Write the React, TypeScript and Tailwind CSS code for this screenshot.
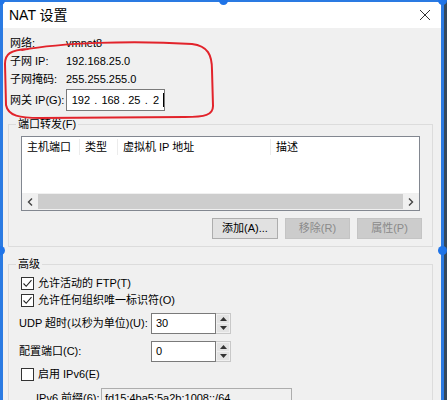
import React from "react";

const FONT = "font-[Liberation_Sans,Noto_Sans_CJK_SC,sans-serif]";

function CheckBox({ checked }: { checked?: boolean }) {
  return (
    <span className="flex h-[13px] w-[13px] shrink-0 items-center justify-center border border-[#333] bg-white">
      {checked && (
        <svg width="11" height="11" viewBox="0 0 11 11">
          <polyline points="1.5,5.5 4.2,8.3 9.5,2.2" fill="none" stroke="#222" strokeWidth="1.1" />
        </svg>
      )}
    </span>
  );
}

function Spin({ value }: { value: string }) {
  return (
    <div className="flex h-[21px]">
      <div className="flex w-[65px] items-center border border-[#7a7a7a] bg-white pl-[4px]">{value}</div>
      <div className="flex w-[15px] flex-col gap-px border-y border-r border-[#c8c8c8] bg-[#f0f0f0] p-px">
        <div className="flex flex-1 items-center justify-center bg-[#e3e3e3]">
          <svg width="7" height="4" viewBox="0 0 7 4"><polygon points="0,4 3.5,0 7,4" fill="#333" /></svg>
        </div>
        <div className="flex flex-1 items-center justify-center bg-[#e3e3e3]">
          <svg width="7" height="4" viewBox="0 0 7 4"><polygon points="0,0 3.5,4 7,0" fill="#333" /></svg>
        </div>
      </div>
    </div>
  );
}

function Group({ title, className, children }: { title: string; className?: string; children: React.ReactNode }) {
  return (
    <div className={`relative border border-[#dcdcdc] ${className ?? ""}`}>
      <span className="absolute -top-[9px] left-[7px] whitespace-nowrap bg-[#f0f0f0] px-[2px] leading-[16px]">{title}</span>
      {children}
    </div>
  );
}

export default function App() {
  return (
    <div className={`relative flex h-[400px] w-[447px] overflow-hidden bg-[#34485c] text-black ${FONT}`}>
      <div className="flex w-[444px] flex-col border-x-[3px] border-t-2 border-[#2a7ae2] bg-[#f0f0f0]">
        {/* title bar */}
        <div className="flex h-[26px] shrink-0 items-center justify-between bg-white pl-[6px] pr-[10px]">
          <span className="text-[14px]">NAT 设置</span>
          <svg width="12" height="12" viewBox="0 0 12 12">
            <path d="M1 1 L11 11 M11 1 L1 11" stroke="#333" strokeWidth="1" />
          </svg>
        </div>

        {/* body */}
        <div className="flex flex-col whitespace-nowrap pl-[5px] pr-[8px] pt-[6px] text-[11px]">
          <div className="flex h-[18px] items-center pl-[2px]">
            <span className="w-[56px]">网络:</span>
            <span>vmnet8</span>
          </div>
          <div className="flex h-[18px] items-center pl-[2px]">
            <span className="w-[56px]">子网 IP:</span>
            <span>192.168.25.0</span>
          </div>
          <div className="flex h-[19px] items-center pl-[2px]">
            <span className="w-[56px]">子网掩码:</span>
            <span>255.255.255.0</span>
          </div>
          <div className="flex h-[22px] items-center pl-[2px]">
            <span className="w-[56px]">网关 IP(G):</span>
            <div className="flex h-[22px] w-[99px] items-center border border-[#7a7a7a] bg-white pl-[4px]">
              <span className="w-[20px] text-center">192</span>
              <span className="w-[10px] text-center">.</span>
              <span className="w-[20px] text-center">168</span>
              <span className="w-[6px] text-center">.</span>
              <span className="w-[16px] text-center">25</span>
              <span className="w-[8px] text-center">.</span>
              <span className="w-[12px] text-center">2</span>
              <span className="ml-[1px] h-[14px] w-px bg-black" />
            </div>
          </div>

          {/* port forwarding */}
          <Group title="端口转发(F)" className="mt-[13px] h-[123px] pl-[12px] pr-[12px] pt-[11px]">
            <div className="flex h-[75px] flex-col border border-[#828790] bg-white">
              <div className="flex h-[20px] items-center">
                <span className="w-[58px] border-r border-[#ececec] pl-[5px]">主机端口</span>
                <span className="w-[38px] border-r border-[#ececec] pl-[5px]">类型</span>
                <span className="w-[153px] border-r border-[#ececec] pl-[5px]">虚拟机 IP 地址</span>
                <span className="pl-[5px]">描述</span>
              </div>
              <div className="flex-1" />
              <div className="flex h-[17px] items-center bg-[#f0f0f0]">
                <span className="flex w-[16px] justify-center">
                  <svg width="6" height="8" viewBox="0 0 6 8"><polyline points="5,0.5 1.5,4 5,7.5" fill="none" stroke="#444" strokeWidth="1.4" /></svg>
                </span>
                <div className="h-[15px] flex-1 bg-[#cdcdcd]" />
                <span className="flex w-[16px] justify-center">
                  <svg width="6" height="8" viewBox="0 0 6 8"><polyline points="1,0.5 4.5,4 1,7.5" fill="none" stroke="#444" strokeWidth="1.4" /></svg>
                </span>
              </div>
            </div>
            <div className="-mr-[2px] mt-[7px] flex justify-end gap-[7px]">
              <button className="h-[21px] w-[66px] border border-[#adadad] bg-[#e1e1e1]">添加(A)...</button>
              <button className="h-[21px] w-[65px] border border-[#c4c4c4] bg-[#cccccc] text-[#8a8a8a]">移除(R)</button>
              <button className="h-[21px] w-[65px] border border-[#c4c4c4] bg-[#cccccc] text-[#8a8a8a]">属性(P)</button>
            </div>
          </Group>

          {/* advanced */}
          <Group title="高级" className="mt-[17px] h-[160px] pl-[12px] pt-[10px]">
            <div className="flex h-[17px] items-center gap-[4px]">
              <CheckBox checked />
              <span>允许活动的 FTP(T)</span>
            </div>
            <div className="flex h-[17px] items-center gap-[4px]">
              <CheckBox checked />
              <span>允许任何组织唯一标识符(O)</span>
            </div>
            <div className="-ml-[2px] mt-[4px] flex items-center">
              <span className="w-[132px]">UDP 超时(以秒为单位)(U):</span>
              <Spin value="30" />
            </div>
            <div className="-ml-[2px] mt-[7px] flex items-center">
              <span className="w-[132px]">配置端口(C):</span>
              <Spin value="0" />
            </div>
            <div className="mt-[4px] flex h-[17px] items-center gap-[4px]">
              <CheckBox />
              <span>启用 IPv6(E)</span>
            </div>
            <div className="mt-[5px] flex items-center pl-[15px]">
              <span className="w-[65px]">IPv6 前缀(6):</span>
              <div className="flex h-[21px] w-[191px] items-center border border-[#adadad] bg-[#f0f0f0] pl-[3px]">fd15:4ba5:5a2b:1008::/64</div>
            </div>
          </Group>
        </div>
      </div>

      {/* selection handles */}
      <span className="absolute -left-[4px] -top-[4px] h-[9px] w-[9px] rounded-full bg-[#1f74e8]" />
      <span className="absolute -top-[4px] left-[219px] h-[9px] w-[9px] rounded-full bg-[#1f74e8]" />
      <span className="absolute -top-[4px] left-[438px] h-[9px] w-[9px] rounded-full bg-[#1f74e8]" />
      <span className="absolute -left-[4px] top-[246px] h-[9px] w-[9px] rounded-full bg-[#1f74e8]" />
      <span className="absolute left-[438px] top-[246px] h-[9px] w-[9px] rounded-full bg-[#1f74e8]" />

      {/* red annotation */}
      <svg className="pointer-events-none absolute left-0 top-0" width="447" height="400" viewBox="0 0 447 400">
        <path
          d="M22 50 C 60 43, 130 40, 192 44 C 208 46, 212 55, 212 70 L 213 106 C 213 115, 205 117, 185 117 L 40 118 C 20 118, 8 116, 6 105 L 5 64 C 5 54, 10 50, 28 49"
          fill="none"
          stroke="#e2232b"
          strokeWidth="2"
          strokeLinecap="round"
        />
      </svg>
    </div>
  );
}
